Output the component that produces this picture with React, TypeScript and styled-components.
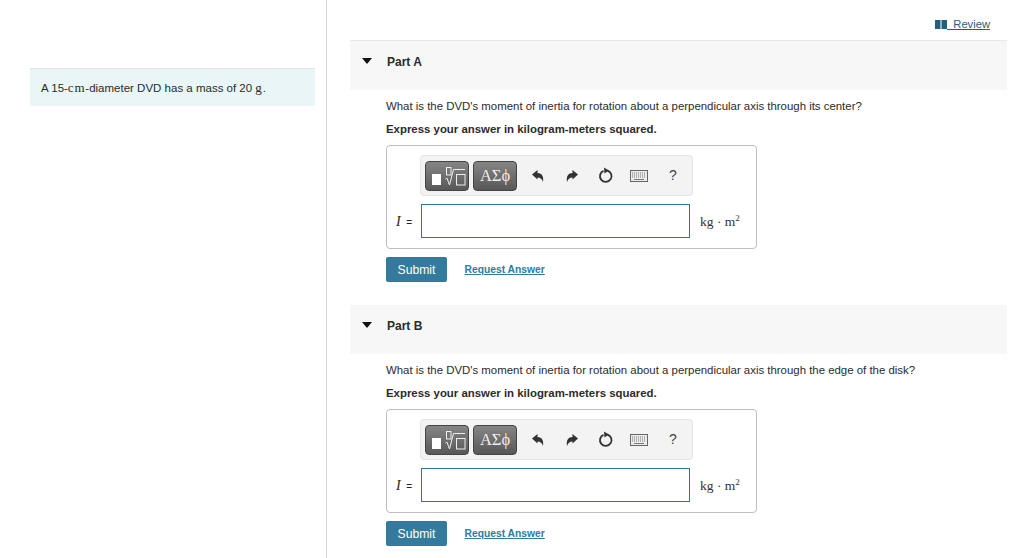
import React from "react";
import styled, { createGlobalStyle } from "styled-components";

const Global = createGlobalStyle`
  html, body { margin: 0; padding: 0; background: #fff; }
  body { font-family: "Liberation Sans", Arial, sans-serif; color: #222; overflow: hidden; }
`;
const Page = styled.div`display: flex; width: 1024px; height: 558px; overflow: hidden;`;
const Side = styled.aside`
  width: 327px; height: 558px; box-sizing: border-box; border-right: 1px solid #cfd8e6;
  flex: none; padding: 68px 11px 0 30px;
`;
const Intro = styled.div`
  background: #e9f5f7; border-top: 1px solid #dfe5e8; height: 38px; box-sizing: border-box;
  padding: 11px 11px 0; font-size: 11.5px; line-height: 16px; color: #2b2b2b; white-space: nowrap;
`;
const Serif = styled.span`font-family: "Liberation Serif", serif; font-size: 13px; letter-spacing: 0.8px;`;
const Main = styled.main`flex: none; width: 657px; margin-left: 23px; display: flex; flex-direction: column;`;
const ReviewRow = styled.div`
  height: 41px; box-sizing: border-box; display: flex; justify-content: flex-end; align-items: flex-start;
  padding: 17px 17px 0 0; border-bottom: 1px solid #e8e8e8;
`;
const ReviewLink = styled.a`
  display: flex; align-items: center; font-size: 11.2px; line-height: 14px; color: #1f5f7a;
  & svg { margin-right: 0; }
`;
const ReviewText = styled.span`white-space: pre; text-decoration: underline;`;
const Section = styled.section`display: flex; flex-direction: column; & + & { margin-top: 23px; }`;
const PartHead = styled.div`
  height: 49px; background: #f7f7f7; display: flex; align-items: flex-start; padding: 14px 0 0 12px; box-sizing: border-box;
`;
const Caret = styled.div`
  width: 0; height: 0; margin-top: 3px; border-left: 5px solid transparent; border-right: 5px solid transparent;
  border-top: 6px solid #111;
`;
const PartTitle = styled.h3`
  margin: 0 0 0 15px; font-size: 12px; line-height: 15px; font-weight: 700; color: #2b2b2b;
`;
const Body = styled.div`padding: 0 0 0 36px; display: flex; flex-direction: column;`;
const Question = styled.p`margin: 9px 0 0; font-size: 11.42px; line-height: 15px; color: #2b2b2b;`;
const Instruction = styled.p`margin: 8px 0 0; font-size: 11.42px; line-height: 15px; font-weight: 700; color: #2b2b2b;`;
const AnswerBox = styled.div`
  margin-top: 8px; width: 371px; height: 104px; box-sizing: border-box; border: 1px solid #bdbdbd; border-radius: 4px;
  display: flex; flex-direction: column; padding: 9px 0 0 33px;
`;
const Toolbar = styled.div`
  width: 273px; height: 41px; box-sizing: border-box; background: #f3f3f3; border: 1px solid #e4e4e4; border-radius: 4px;
  display: flex; align-items: center; padding-left: 4px;
`;
const MathButton = styled.div`
  width: 44px; height: 30px; box-sizing: border-box; margin-right: 4px; border-radius: 4px; border: 1px solid #444;
  background: linear-gradient(#858585, #585858); color: #eee; display: flex; align-items: center; justify-content: center;
  font-family: "Liberation Serif", serif; font-size: 16.5px;
`;
const ToolIcon = styled.div<{ $w: number }>`
  width: ${(p) => p.$w}px; height: 20px; display: flex; align-items: center; justify-content: center; flex: none; color: #444;
  font-size: 14px; font-family: "Liberation Sans", sans-serif;
`;
const HelpMark = styled.span`margin: -2px 0 0 1px;`;
const Row = styled.div`display: flex; align-items: center; margin-top: 8px; margin-left: -33px;`;
const Label = styled.div`
  width: 34px; box-sizing: border-box; padding: 2px 0 0 9px; font-family: "Liberation Sans", sans-serif; font-size: 10px; color: #222; white-space: pre;
  & i { font-family: "Liberation Serif", serif; font-size: 14px; }
`;
const Input = styled.div`width: 269px; height: 34px; box-sizing: border-box; border: 1px solid #2f7596; background: #fff;`;
const Unit = styled.div`
  margin-left: 10px; padding-top: 2px; font-family: "Liberation Serif", serif; font-size: 13.5px; color: #333; white-space: nowrap;
  & sup { font-size: 9px; line-height: 0; }
`;
const Actions = styled.div`display: flex; align-items: center; margin-top: 8px; height: 25px;`;
const Submit = styled.button`
  width: 61px; height: 25px; padding: 0; border: 0; border-radius: 2px; background: #337a9c; color: #fff;
  font-family: "Liberation Sans", sans-serif; font-size: 12.2px;
`;
const RequestLink = styled.a`
  margin: 0 0 0 17.500px; font-size: 10.3px; font-weight: 700; color: #2e7ca0; text-decoration: underline;
`;

const MatrixIcon = () => (
  <svg width="40" height="24" viewBox="0 0 40 24" fill="none">
    <rect x="5" y="10" width="9" height="11" fill="#fff" />
    <rect x="19.500" y="3.500" width="4.500" height="7.500" stroke="#eee" strokeWidth="1" />
    <path d="M18.500 15l1.500-.8 2.500 6.800L26.500 5.500H38" stroke="#eee" strokeWidth="1" />
    <rect x="29.500" y="10.500" width="8.500" height="10.500" stroke="#eee" strokeWidth="1" />
  </svg>
);
const Undo = () => (
  <svg width="14" height="14" viewBox="0 0 14 14"><path d="M1 5.500L6.500 1v3C10.500 4 13 7 12 13c-1-3-2.500-4.500-5.500-4.500v2z" fill="#333" /></svg>
);
const Redo = () => (
  <svg width="14" height="14" viewBox="0 0 14 14"><path d="M13 5.500L7.500 1v3C3.500 4 1 7 2 13c1-3 2.500-4.500 5.500-4.500v2z" fill="#333" /></svg>
);
const Reset = () => (
  <svg width="16" height="17" viewBox="0 0 16 17" fill="none">
    <path d="M9.500 3.600a5.800 5.800 0 1 1-4 .2" stroke="#333" strokeWidth="1.800" />
    <path d="M6 .5l5 3-4.500 3z" fill="#333" />
  </svg>
);
const Keyboard = () => (
  <svg width="18" height="12" viewBox="0 0 18 12">
    <rect x=".5" y=".5" width="17" height="11" fill="#ececec" stroke="#666" />
    <path d="M2 3h14M2 5h14M2 7h14" stroke="#777" strokeDasharray="1 1" />
    <path d="M4 9.500h10" stroke="#777" />
  </svg>
);
const Book = () => (
  <svg width="12" height="9" viewBox="0 0 12 9">
    <path d="M0 0h5.500v9H0zM6.500 0H12v9H6.500z" fill="#245f7d" />
  </svg>
);

const Part = ({ name, text }: { name: string; text: string }) => (
  <Section>
    <PartHead>
      <Caret />
      <PartTitle>{name}</PartTitle>
    </PartHead>
    <Body>
      <Question>{text}</Question>
      <Instruction>Express your answer in kilogram-meters squared.</Instruction>
      <AnswerBox>
        <Toolbar>
          <MathButton><MatrixIcon /></MathButton>
          <MathButton>ΑΣϕ</MathButton>
          <ToolIcon $w={34}><Undo /></ToolIcon>
          <ToolIcon $w={34}><Redo /></ToolIcon>
          <ToolIcon $w={33}><Reset /></ToolIcon>
          <ToolIcon $w={34}><Keyboard /></ToolIcon>
          <ToolIcon $w={33}><HelpMark>?</HelpMark></ToolIcon>
        </Toolbar>
        <Row>
          <Label><i>I</i>{"  ="}</Label>
          <Input />
          <Unit>kg · m<sup>2</sup></Unit>
        </Row>
      </AnswerBox>
      <Actions>
        <Submit>Submit</Submit>
        <RequestLink>Request Answer</RequestLink>
      </Actions>
    </Body>
  </Section>
);

export default function App() {
  return (
    <Page>
      <Global />
      <Side>
        <Intro>A 15-<Serif>cm</Serif>-diameter DVD has a mass of 20 <Serif>g</Serif>.</Intro>
      </Side>
      <Main>
        <ReviewRow>
          <ReviewLink><Book /><ReviewText>{"  Review"}</ReviewText></ReviewLink>
        </ReviewRow>
        <Part name="Part A" text="What is the DVD's moment of inertia for rotation about a perpendicular axis through its center?" />
        <Part name="Part B" text="What is the DVD's moment of inertia for rotation about a perpendicular axis through the edge of the disk?" />
      </Main>
    </Page>
  );
}
